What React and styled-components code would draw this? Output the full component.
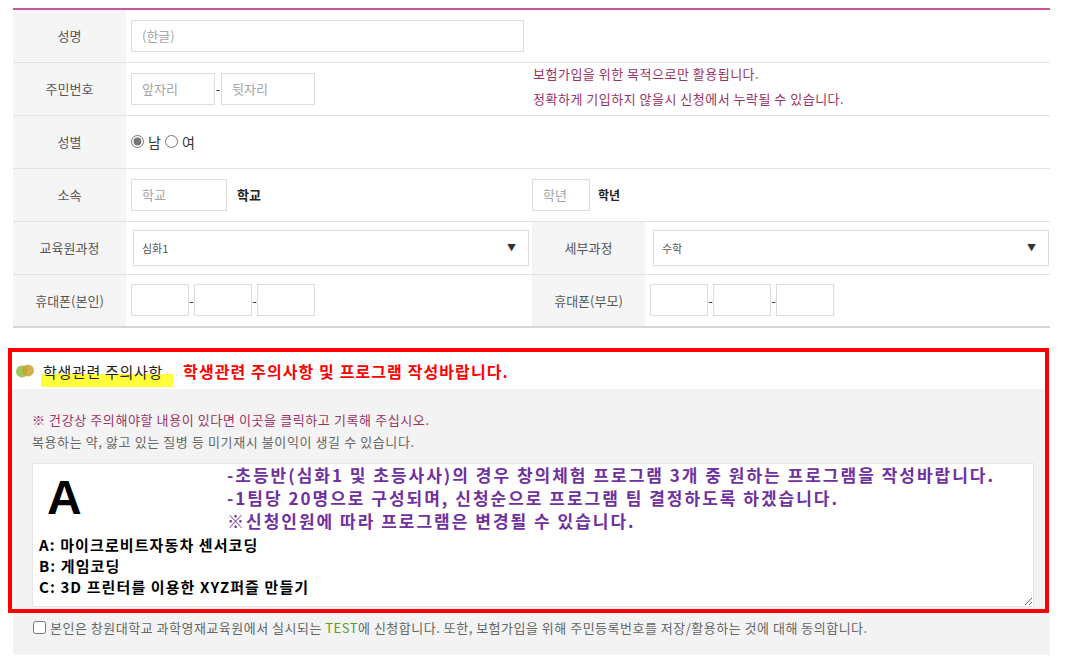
import React from 'react';
import styled, { createGlobalStyle } from 'styled-components';

const GlobalStyle = createGlobalStyle`
  * { box-sizing: border-box; }
  body {
    margin: 0;
    background: #fff;
    color: #333;
    font-family: "Noto Sans CJK KR", "Noto Sans", sans-serif;
  }
`;

const Page = styled.div`
  width: 1060px;
  padding: 8px 0 10px 13px;
`;

const FormTable = styled.table`
  width: 1037px;
  table-layout: fixed;
  border-collapse: collapse;
  border-top: 2px solid #c9569b;
  border-bottom: 2px solid #d6d6d6;
`;

const Row = styled.tr`
  border-bottom: 1px solid #e2e2e2;
`;

const Label = styled.th`
  height: 53px;
  padding: 0;
  background: #f5f5f5;
  font-size: 13px;
  font-weight: 400;
  color: #555;
  text-align: center;
`;

const Cell = styled.td`
  padding: 0 ${p => (p.$flush ? '0' : '5px')};
  font-size: 13px;
  vertical-align: middle;
`;

const Inline = styled.div`
  display: flex;
  align-items: center;
  gap: ${p => p.$gap || 0}px;
`;

const TextInput = styled.input`
  width: ${p => p.$w}px;
  height: 32px;
  padding: 0 10px;
  border: 1px solid #ddd;
  background: #fff;
  font-family: inherit;
  font-size: 13px;
  color: #333;
  outline: none;

  &::placeholder {
    color: #a5a5a5;
  }
`;

const Dash = styled.span`
  width: ${p => p.$w || 5}px;
  text-align: center;
  font-size: 13px;
  color: #333;
`;

const Unit = styled.b`
  font-size: ${p => p.$size || 13}px;
  color: #222;
`;

const Note = styled.div`
  margin-top: -6px;
  padding-left: 1px;
  font-size: 13px;
  line-height: 25px;
  letter-spacing: 0.5px;
  color: #993366;
`;

const RadioLabel = styled.label`
  display: flex;
  align-items: center;
  gap: 4px;
  font-size: 14px;
  color: #333;

  input {
    margin: 0;
    width: 13px;
    height: 13px;
    accent-color: #777;
  }
`;

const SelectBox = styled.div`
  position: relative;
  width: 396px;
  height: 36px;
  margin-left: ${p => p.$offset || 0}px;

  &::after {
    content: '▼';
    position: absolute;
    right: 13px;
    top: 11px;
    font-size: 9px;
    color: #333;
    pointer-events: none;
  }
`;

const Select = styled.select`
  appearance: none;
  width: 100%;
  height: 100%;
  padding: 0 8px;
  border: 1px solid #ddd;
  background: #fff;
  font-family: inherit;
  font-size: 11px;
  color: #555;
  outline: none;
`;

const Frame = styled.div`
  width: 1041px;
  margin: 20px 0 0 -5px;
  border: 4px solid #ff0000;
`;

const Header = styled.div`
  display: flex;
  align-items: center;
  height: 37px;
  padding-left: 3px;
  background: #fff;
`;

const Marker = styled.span`
  display: inline-block;
  margin-left: 6px;
  padding: 7px 10px 5px 2px;
  font-size: 15px;
  line-height: 20px;
  letter-spacing: 0.7px;
  color: #222;
  background: linear-gradient(to bottom, transparent 19px, #ffff3a 19px, #ffff3a 100%);
`;

const Warning = styled.span`
  margin-left: 10px;
  font-size: 16px;
  font-weight: 700;
  letter-spacing: 1.1px;
  color: #ff0000;
`;

const Body = styled.div`
  padding: 20px 11px 2px 20px;
  background: #f3f3f3;
`;

const Hint = styled.p`
  margin: 0;
  font-size: 13px;
  line-height: 22px;
  letter-spacing: 0.6px;
  color: ${p => p.$color || '#666'};
`;

const Memo = styled.div`
  height: 144px;
  margin-top: 10px;
  padding: 0 6px;
  border: 1px solid #e6e6e6;
  background: #fff;
  overflow: hidden;
  resize: both;
  outline: none;
`;

const MemoTop = styled.div`
  display: flex;
`;

const BigLetter = styled.div`
  width: 188px;
  flex: none;
  padding-left: 8px;
  margin-top: 10px;
  font-family: "Liberation Sans", Arial, sans-serif;
  font-size: 48px;
  font-weight: 700;
  line-height: 48px;
  color: #000;
`;

const Guide = styled.div`
  margin-top: -1px;
  white-space: nowrap;
  font-size: 17px;
  font-weight: 700;
  line-height: 23px;
  letter-spacing: 2px;
  color: #7030a0;
`;

const ProgramList = styled.div`
  margin-top: 2px;
  font-size: 15px;
  font-weight: 700;
  line-height: 21px;
  letter-spacing: 1.1px;
  color: #000;
`;

const Agree = styled.label`
  display: flex;
  align-items: center;
  gap: 4px;
  width: 1037px;
  height: 42px;
  padding: 0 20px 14px;
  background: #f3f3f3;
  font-size: 13px;
  letter-spacing: 0.5px;
  color: #666;

  input {
    margin: 0;
    width: 13px;
    height: 13px;
  }
`;

const Green = styled.span`
  color: #5e9a1e;
`;

const Bullet = () => (
  <svg width="20" height="14" viewBox="0 0 20 14">
    <circle cx="7" cy="7.5" r="6" fill="#9cc95a" />
    <circle cx="13" cy="6.5" r="6" fill="#c8a233" fillOpacity="0.85" />
  </svg>
);

export default function App() {
  return (
    <Page>
      <GlobalStyle />
      <FormTable>
        <colgroup>
          <col style={{ width: 113 }} />
          <col style={{ width: 406 }} />
          <col style={{ width: 113 }} />
          <col style={{ width: 405 }} />
        </colgroup>
        <tbody>
          <Row>
            <Label>성명</Label>
            <Cell colSpan={3}>
              <TextInput $w={393} placeholder="(한글)" />
            </Cell>
          </Row>
          <Row>
            <Label>주민번호</Label>
            <Cell>
              <Inline>
                <TextInput $w={84} placeholder="앞자리" />
                <Dash $w={6}>-</Dash>
                <TextInput $w={94} placeholder="뒷자리" />
              </Inline>
            </Cell>
            <Cell colSpan={2} $flush>
              <Note>
                보험가입을 위한 목적으로만 활용됩니다.
                <br />
                정확하게 기입하지 않을시 신청에서 누락될 수 있습니다.
              </Note>
            </Cell>
          </Row>
          <Row>
            <Label>성별</Label>
            <Cell colSpan={3}>
              <Inline $gap={4}>
                <RadioLabel>
                  <input type="radio" name="gender" defaultChecked />남
                </RadioLabel>
                <RadioLabel>
                  <input type="radio" name="gender" />여
                </RadioLabel>
              </Inline>
            </Cell>
          </Row>
          <Row>
            <Label>소속</Label>
            <Cell>
              <Inline $gap={10}>
                <TextInput $w={96} placeholder="학교" />
                <Unit>학교</Unit>
              </Inline>
            </Cell>
            <Cell colSpan={2} $flush>
              <Inline $gap={8}>
                <TextInput $w={58} placeholder="학년" />
                <Unit $size={12}>학년</Unit>
              </Inline>
            </Cell>
          </Row>
          <Row>
            <Label>교육원과정</Label>
            <Cell>
              <SelectBox $offset={2}>
                <Select defaultValue="심화1">
                  <option>심화1</option>
                </Select>
              </SelectBox>
            </Cell>
            <Label>세부과정</Label>
            <Cell>
              <SelectBox $offset={3}>
                <Select defaultValue="수학">
                  <option>수학</option>
                </Select>
              </SelectBox>
            </Cell>
          </Row>
          <Row>
            <Label>휴대폰(본인)</Label>
            <Cell>
              <Inline>
                <TextInput $w={58} />
                <Dash>-</Dash>
                <TextInput $w={58} />
                <Dash>-</Dash>
                <TextInput $w={58} />
              </Inline>
            </Cell>
            <Label>휴대폰(부모)</Label>
            <Cell>
              <Inline>
                <TextInput $w={58} />
                <Dash>-</Dash>
                <TextInput $w={58} />
                <Dash>-</Dash>
                <TextInput $w={58} />
              </Inline>
            </Cell>
          </Row>
        </tbody>
      </FormTable>

      <Frame>
        <Header>
          <Bullet />
          <Marker>학생관련 주의사항</Marker>
          <Warning>학생관련 주의사항 및 프로그램 작성바랍니다.</Warning>
        </Header>
        <Body>
          <Hint $color="#993366">※ 건강상 주의해야할 내용이 있다면 이곳을 클릭하고 기록해 주십시오.</Hint>
          <Hint>복용하는 약, 앓고 있는 질병 등 미기재시 불이익이 생길 수 있습니다.</Hint>
          <Memo contentEditable suppressContentEditableWarning>
            <MemoTop>
              <BigLetter>A</BigLetter>
              <Guide>
                -초등반(심화1 및 초등사사)의 경우 창의체험 프로그램 3개 중 원하는 프로그램을 작성바랍니다.
                <br />
                -1팀당 20명으로 구성되며, 신청순으로 프로그램 팀 결정하도록 하겠습니다.
                <br />
                ※신청인원에 따라 프로그램은 변경될 수 있습니다.
              </Guide>
            </MemoTop>
            <ProgramList>
              A: 마이크로비트자동차 센서코딩
              <br />
              B: 게임코딩
              <br />
              C: 3D 프린터를 이용한 XYZ퍼즐 만들기
            </ProgramList>
          </Memo>
        </Body>
      </Frame>

      <Agree>
        <input type="checkbox" />
        <span>
          본인은 창원대학교 과학영재교육원에서 실시되는 <Green>TEST</Green>에 신청합니다. 또한, 보험가입을 위해 주민등록번호를 저장/활용하는 것에 대해 동의합니다.
        </span>
      </Agree>
    </Page>
  );
}
